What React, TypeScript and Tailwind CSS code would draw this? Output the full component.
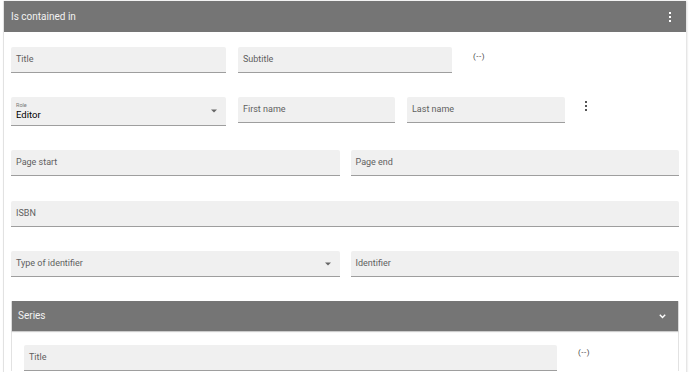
import React from 'react';

const font = { fontFamily: 'Roboto, "Liberation Sans", sans-serif' };

function Kebab({ color }: { color: string }) {
  return (
    <svg width="4" height="10" viewBox="0 0 4 10" className="block">
      <rect x="1" y="0" width="2" height="2" fill={color} />
      <rect x="1" y="4" width="2" height="2" fill={color} />
      <rect x="1" y="8" width="2" height="2" fill={color} />
    </svg>
  );
}

function Caret() {
  return (
    <svg width="6" height="4" viewBox="0 0 6 4" className="block">
      <path d="M0 0.5 L6 0.5 L3 3.5 Z" fill="#666" />
    </svg>
  );
}

function Field({ label, className = '', select = false }: { label: string; className?: string; select?: boolean }) {
  return (
    <div
      className={`flex h-[26px] items-center justify-between rounded-t-[2px] border-b border-[#9e9e9e] bg-[#f0f0f0] pl-[5px] pr-[9px] ${className}`}
    >
      <span className="text-[9px] leading-none text-[#5f5f5f]">{label}</span>
      {select && <Caret />}
    </div>
  );
}

function Empty() {
  return <span className="block text-[8px] leading-none tracking-[0.5px] text-[#444]">(--)</span>;
}

export default function App() {
  return (
    <div className="h-[372px] w-[690px] overflow-hidden bg-white leading-none" style={font}>
      <div className="ml-[3px] mt-px w-[683px] border-l border-[#e2e2e2] pb-4 shadow-[1px_0_2px_rgba(0,0,0,0.15)]">
        {/* header */}
        <div className="flex h-[31px] items-center justify-between bg-[#757575] pl-[7px] pr-[14px]">
          <span className="text-[10px] text-[#f2f2f2]">Is contained in</span>
          <Kebab color="#fff" />
        </div>

        <div className="pl-[7px] pr-[7px]">
          {/* title row */}
          <div className="mt-[15px] flex items-start gap-3">
            <Field label="Title" className="w-[215px]" />
            <Field label="Subtitle" className="w-[214px]" />
            <div className="ml-[9px] mt-[6px]">
              <Empty />
            </div>
          </div>

          {/* contributor row */}
          <div className="mt-[24px] flex items-start gap-3">
            <div className="flex h-[29px] w-[215px] items-center justify-between rounded-t-[2px] border-b border-[#9e9e9e] bg-[#f0f0f0] pl-[5px] pr-[9px]">
              <div className="flex flex-col leading-none">
                <span className="text-[5.5px] text-[#777]">Role</span>
                <span className="mt-[2px] text-[9.5px] text-black">Editor</span>
              </div>
              <Caret />
            </div>
            <Field label="First name" className="w-[157px]" />
            <Field label="Last name" className="w-[158px]" />
            <div className="ml-[7px] mt-[4px]">
              <Kebab color="#555" />
            </div>
          </div>

          {/* pages */}
          <div className="mt-[24px] flex gap-[11px]">
            <Field label="Page start" className="flex-1" />
            <Field label="Page end" className="flex-1" />
          </div>

          <div className="mt-[25px]">
            <Field label="ISBN" className="h-[25px]" />
          </div>

          <div className="mt-[24px] flex gap-[11px]">
            <Field label="Type of identifier" select className="flex-1" />
            <Field label="Identifier" className="flex-1" />
          </div>

          {/* series */}
          <div className="mt-[24px] border-x border-[#e2e2e2]">
            <div className="flex h-[30px] items-center justify-between bg-[#757575] pl-[6px] pr-[12px] shadow-[0_1px_1px_rgba(0,0,0,0.2)]">
              <span className="text-[10px] text-[#f2f2f2]">Series</span>
              <svg width="7" height="5" viewBox="0 0 7 5" className="block">
                <path d="M0.8 0.8 L3.5 3.6 L6.2 0.8" stroke="#fff" strokeWidth="1.4" fill="none" />
              </svg>
            </div>
            <div className="flex items-start pl-[12px] pt-[14px]">
              <Field label="Title" className="w-[533px]" />
              <div className="ml-[21px] mt-[4px]">
                <Empty />
              </div>
            </div>
          </div>
        </div>
      </div>
    </div>
  );
}
